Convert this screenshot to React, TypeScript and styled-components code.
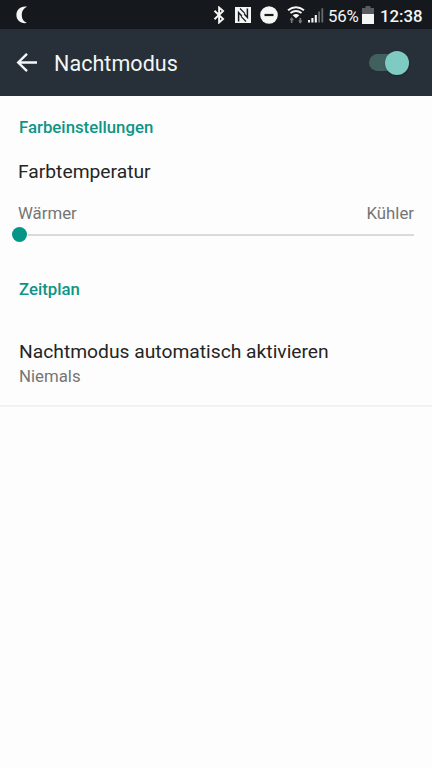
import React from 'react';
import styled, { createGlobalStyle } from 'styled-components';

const GlobalStyle = createGlobalStyle`
  * { box-sizing: border-box; }
  body {
    margin: 0;
    background: #fdfdfd;
    font-family: Roboto, "Liberation Sans", sans-serif;
  }
`;

const Screen = styled.div`
  width: 432px;
  height: 768px;
  overflow: hidden;
  background: #fdfdfd;
`;

const StatusBar = styled.header`
  display: flex;
  align-items: center;
  height: 29px;
  padding: 1px 9px 0 16px;
  background: #15181c;
  color: #f4f6f6;
`;

const Icon = styled.svg<{ $gap?: number }>`
  display: block;
  flex: none;
  margin-left: ${p => p.$gap ?? 0}px;
`;

const StatusIcons = styled.div`
  display: flex;
  align-items: center;
  margin-left: auto;
`;

const StatusText = styled.span<{ $width: number; $gap: number; $bold?: boolean }>`
  width: ${p => p.$width}px;
  margin-left: ${p => p.$gap}px;
  padding-top: 1px;
  font-size: 16.8px;
  font-weight: ${p => (p.$bold ? 500 : 400)};
  line-height: 24px;
  letter-spacing: ${p => (p.$bold ? 0 : -0.2)}px;
  white-space: nowrap;
`;

const AppBar = styled.div`
  display: flex;
  align-items: center;
  height: 67px;
  padding: 0 23px 0 16px;
  background: #273038;
  color: #f2f6f7;
`;

const BackButton = styled.button`
  display: flex;
  padding: 0;
  border: 0;
  background: none;
  color: inherit;
`;

const Title = styled.h1`
  margin: 2px 0 0 16px;
  font-size: 21.5px;
  font-weight: 400;
  line-height: 24px;
  letter-spacing: 0.05px;
`;

const Switch = styled.button`
  display: flex;
  align-items: center;
  justify-content: flex-end;
  width: 40px;
  height: 17px;
  margin-left: auto;
  padding: 0;
  border: 0;
  border-radius: 9px;
  background: #42605f;
`;

const Thumb = styled.span`
  flex: none;
  width: 24px;
  height: 24px;
  border-radius: 50%;
  background: #7dcbc2;
  box-shadow: 0 1px 2px rgba(0, 0, 0, 0.25);
`;

const Content = styled.main`
  padding-top: 19px;
`;

const SectionTitle = styled.h2`
  margin: 0;
  padding-left: 19px;
  color: #109485;
  font-size: 16.8px;
  font-weight: 500;
  line-height: 24px;
`;

const Setting = styled.section<{ $top: number; $bottom: number; $left: number }>`
  padding: ${p => p.$top}px 18px ${p => p.$bottom}px ${p => p.$left}px;
`;

const Label = styled.div`
  color: #252525;
  font-size: 19.25px;
  line-height: 24px;
`;

const Hint = styled.div`
  color: #757575;
  font-size: 16.8px;
  line-height: 24px;
`;

const RangeLabels = styled.div`
  display: flex;
  justify-content: space-between;
  margin-top: 17px;
`;

const Slider = styled.div`
  display: flex;
  align-items: center;
  height: 15px;
  margin: 2px 0 0 -6px;
`;

const Handle = styled.span`
  flex: none;
  width: 15px;
  height: 15px;
  border-radius: 50%;
  background: #069688;
`;

const Track = styled.span`
  flex: 1;
  height: 2px;
  margin-left: 1px;
  background: #dadada;
`;

const Divider = styled.hr`
  height: 2px;
  margin: 0;
  border: 0;
  background: #f2f2f2;
`;

export default function App() {
  return (
    <>
      <GlobalStyle />
      <Screen>
        <StatusBar>
          <Icon width="12" height="18" viewBox="0 0 12 18" fill="currentColor">
            <path d="M11 0.7C4.5-.3.4 4 .4 9S4.5 18 11 17C7.3 15.5 5.8 12.5 5.8 9S7.3 2.3 11 .7Z" />
          </Icon>
          <StatusIcons>
            <Icon width="12" height="18" viewBox="0 0 12 18" fill="none" stroke="currentColor" strokeWidth="1.9">
              <path d="M1.5 4.8 10.1 13l-4 3.5v-15l4 3.5-8.6 8.2" />
            </Icon>
            <Icon $gap={10} width="16" height="16" viewBox="0 0 16 16" fill="none">
              <path d="M0 0h16v16H0Z" fill="currentColor" />
              <path d="M3.6 14.5V5.6l3.2 3.3M12.4 1.5v8.9L9.2 7.1" stroke="#15181c" strokeWidth="1.5" />
              <path d="M5 1.5l5 5.2M6 9.3l5 5.2" stroke="#15181c" strokeWidth="1.1" />
            </Icon>
            <Icon $gap={9} width="18" height="18" viewBox="0 0 18 18">
              <circle cx="9" cy="9" r="8.8" fill="currentColor" />
              <path d="M4.5 9h9" stroke="#15181c" strokeWidth="2.2" />
            </Icon>
            <Icon $gap={9} width="18" height="18" viewBox="0 0 18 18" fill="none">
              <path d="M1 4.2Q9-1.8 17 4.2M3.5 7q5.5-4 11 0" stroke="currentColor" strokeWidth="2" />
              <path d="M5.6 9.3q3.4-2.6 6.8 0L9 12.3Z" fill="currentColor" />
              <path d="M4.7 12v5M13.3 12v5" stroke="#75797b" strokeWidth="1.7" />
              <path d="m2.5 14.3 2.2-3.3 2.2 3.3M11.1 14.5l2.2 3.3 2.2-3.3" fill="#75797b" />
            </Icon>
            <Icon $gap={3} width="16" height="16" viewBox="0 0 16 16">
              <path d="M1 13v2.5M4.4 11v4.5M7.8 8v7.5" stroke="currentColor" strokeWidth="2.1" />
              <path d="M11.1 4.5v11M14.3 1.2v14.3" stroke="#666b6e" strokeWidth="1.8" />
            </Icon>
            <StatusText $width={31} $gap={4}>56%</StatusText>
            <Icon $gap={3} width="12" height="18" viewBox="0 0 12 18">
              <path d="M3.5 0h5v2H12v6H0V2h3.5Z" fill="#595c5f" />
              <path d="M0 8h12v10H0Z" fill="currentColor" />
            </Icon>
            <StatusText $width={43} $gap={6} $bold>12:38</StatusText>
          </StatusIcons>
        </StatusBar>
        <AppBar>
          <BackButton aria-label="Zurück">
            <Icon width="22" height="20" viewBox="0 0 22 20" fill="none" stroke="currentColor" strokeWidth="2.4">
              <path d="M21 9.5H2.5M11 .8 2.2 9.5l8.8 8.7" />
            </Icon>
          </BackButton>
          <Title>Nachtmodus</Title>
          <Switch role="switch" aria-checked="true" aria-label="Nachtmodus">
            <Thumb />
          </Switch>
        </AppBar>
        <Content>
          <SectionTitle>Farbeinstellungen</SectionTitle>
          <Setting $top={21} $bottom={35} $left={18}>
            <Label>Farbtemperatur</Label>
            <RangeLabels>
              <Hint>Wärmer</Hint>
              <Hint>Kühler</Hint>
            </RangeLabels>
            <Slider>
              <Handle />
              <Track />
            </Slider>
          </Setting>
          <SectionTitle>Zeitplan</SectionTitle>
          <Setting $top={39} $bottom={17} $left={19}>
            <Label>Nachtmodus automatisch aktivieren</Label>
            <Hint>Niemals</Hint>
          </Setting>
          <Divider />
        </Content>
      </Screen>
    </>
  );
}
